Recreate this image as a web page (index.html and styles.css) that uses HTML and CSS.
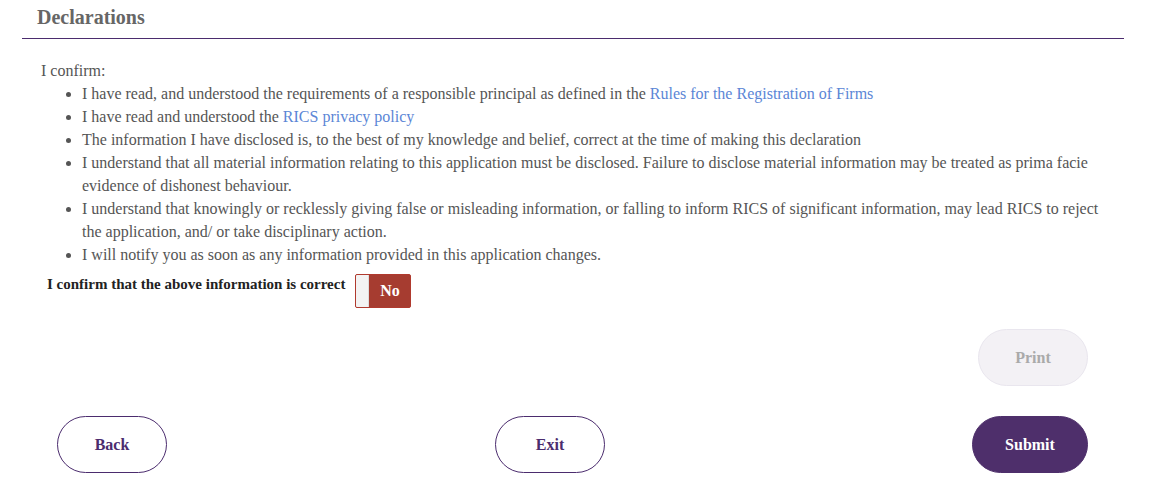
FILE: index.html
```html
<!DOCTYPE html>
<html>
<head>
<meta charset="utf-8">
<link rel="stylesheet" href="styles.css">
</head>
<body>
<div class="page">
  <h2 class="title">Declarations</h2>
  <div class="content">
    <p class="intro">I confirm:</p>
    <ul class="list">
      <li>I have read, and understood the requirements of a responsible principal as defined in the <a href="#">Rules for the Registration of Firms</a></li>
      <li>I have read and understood the <a href="#">RICS privacy policy</a></li>
      <li>The information I have disclosed is, to the best of my knowledge and belief, correct at the time of making this declaration</li>
      <li>I understand that all material information relating to this application must be disclosed. Failure to disclose material information may be treated as prima facie evidence of dishonest behaviour.</li>
      <li>I understand that knowingly or recklessly giving false or misleading information, or falling to inform RICS of significant information, may lead RICS to reject the application, and/ or take disciplinary action.</li>
      <li>I will notify you as soon as any information provided in this application changes.</li>
    </ul>
    <div class="confirm">
      <span class="confirm-label">I confirm that the above information is correct</span>
      <span class="toggle"><span class="knob"></span><span class="toggle-text">No</span></span>
    </div>
    <div class="print-row">
      <button class="btn btn-print">Print</button>
    </div>
    <div class="actions">
      <button class="btn btn-outline">Back</button>
      <button class="btn btn-outline btn-exit">Exit</button>
      <button class="btn btn-primary">Submit</button>
    </div>
  </div>
</div>
</body>
</html>
```
FILE: styles.css
```css
html, body {
  margin: 0;
  padding: 0;
  background: #fff;
}
body {
  font-family: "Liberation Serif", "Times New Roman", serif;
}
.page {
  padding: 0 38px 0 22px;
}
.title {
  margin: 0;
  padding: 6px 15px 9px;
  font-size: 20px;
  line-height: 23px;
  font-weight: bold;
  color: #666;
  border-bottom: 1px solid #4b2c6e;
}
.content {
  padding: 0 0 0 19px;
}
.intro {
  margin: 20px 0 0;
  font-size: 16px;
  line-height: 23px;
  color: #555;
}
.list {
  margin: 0;
  padding: 0 18px 0 41px;
  font-size: 16px;
  line-height: 23px;
  color: #555;
}
.list a {
  color: #5b86d6;
  text-decoration: none;
}
.confirm {
  display: flex;
  align-items: flex-start;
  gap: 10px;
  margin-top: 8px;
  padding-left: 6px;
}
.confirm-label {
  font-size: 15px;
  font-weight: bold;
  color: #222;
  line-height: 17px;
  padding-top: 2px;
}
.toggle {
  display: flex;
  width: 56px;
  height: 34px;
  border: 1px solid #b03a2e;
  border-radius: 2px;
  background: #a63c30;
  box-sizing: border-box;
  overflow: hidden;
}
.knob {
  width: 12px;
  background: #f3f3f3;
  border-right: 1px solid #ddd;
}
.toggle-text {
  flex: 1;
  color: #fff;
  font-weight: bold;
  font-size: 16px;
  display: flex;
  align-items: center;
  justify-content: center;
}
.print-row {
  display: flex;
  justify-content: flex-end;
  margin-top: 21px;
  padding-right: 36px;
}
.btn {
  font-family: "Liberation Serif", "Times New Roman", serif;
  font-weight: bold;
  font-size: 16px;
  height: 57px;
  border-radius: 29px;
  box-sizing: border-box;
  cursor: pointer;
}
.btn-print {
  width: 110px;
  background: #f3f1f5;
  border: 1px solid #e9e6ee;
  color: #aaa;
}
.actions {
  display: flex;
  margin-top: 30px;
  padding: 0 36px 0 16px;
}
.btn-outline {
  width: 110px;
  background: #fff;
  border: 1px solid #4b2c6e;
  color: #4b2c6e;
}
.btn-exit {
  margin-left: 328px;
}
.btn-primary {
  margin-left: auto;
  width: 116px;
  background: #4e2f6b;
  border: 1px solid #4e2f6b;
  color: #fff;
}
```
